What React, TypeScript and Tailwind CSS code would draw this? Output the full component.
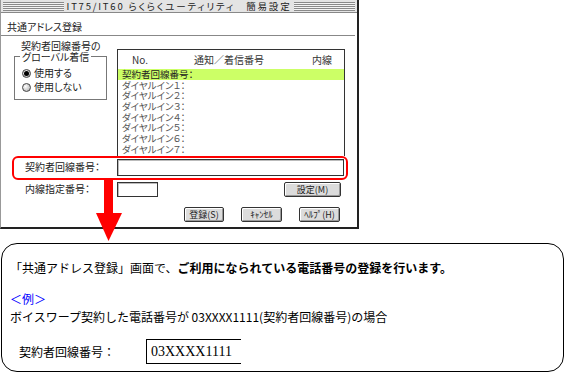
import React from "react";

const jp = "font-['Noto_Sans_CJK_JP','Noto_Sans',sans-serif]";
const palt = "[font-feature-settings:'palt']";

const Stripes = () => (
  <div className="flex-1 h-[9px] bg-[repeating-linear-gradient(to_bottom,#8a8a8a_0px,#8a8a8a_1px,#f4f4f4_1px,#f4f4f4_2px)]" />
);

const MacButton = ({ label, w }: { label: string; w: string }) => (
  <div
    className={`${w} h-[15px] flex items-center justify-center rounded-[2px] border border-[#333] bg-[#dcdcdc] shadow-[inset_1px_1px_0_#fff,inset_-1px_-1px_0_#999] text-[9px] leading-[11px] text-[#222]`}
  >
    {label}
  </div>
);

const Radio = ({ on, label }: { on: boolean; label: string }) => (
  <div className="flex items-center h-[12px] gap-[3px]">
    <div className="w-[9px] h-[9px] rounded-full border border-[#444] bg-[radial-gradient(circle_at_35%_35%,#fff,#aaa)] flex items-center justify-center">
      {on && <div className="w-[5px] h-[5px] rounded-full bg-black" />}
    </div>
    <span className="text-[10px] leading-[12px] text-[#222]">{label}</span>
  </div>
);

const rows = [
  "ダイヤルイン１：",
  "ダイヤルイン２：",
  "ダイヤルイン３：",
  "ダイヤルイン４：",
  "ダイヤルイン５：",
  "ダイヤルイン６：",
  "ダイヤルイン７：",
];

const SettingsWindow = () => {
  return (
    <div className={`w-[359px] h-[229px] border-l border-l-[#999] border-r-2 border-r-[#222] border-b-2 border-b-[#222] bg-white ${palt}`}>
      {/* title bar */}
      <div className="h-[13px] flex items-center gap-[3px] px-[2px] bg-[#e4e4e4] border-b border-[#888]">
        <Stripes />
        <span className="text-[9.5px] leading-[12px] tracking-[1.8px] text-[#222] whitespace-nowrap">
          IT75/IT60 らくらくユーティリティ　簡易設定
        </span>
        <Stripes />
      </div>

      <div className="h-[23px] pt-[8px] pl-[6px] text-[10px] leading-[12px] text-[#222] border-b border-[#888] mr-[2px]">
        共通アドレス登録
      </div>

      {/* group + list */}
      <div className="flex h-[120px]">
        <div className="w-[116px] shrink-0">
          <div className="pt-[5px] pl-[20px] text-[10px] leading-[10px] text-[#222]">
            契約者回線番号の
          </div>
          <div className="relative ml-[13px] mt-[5px] w-[93px] h-[44px] border border-[#777] pt-[10px] pl-[7px] flex flex-col gap-[2px]">
            <span className="absolute left-[5px] -top-[5px] bg-white px-[2px] text-[10px] leading-[10px] text-[#222]">
              グローバル着信
            </span>
            <Radio on label="使用する" />
            <Radio on={false} label="使用しない" />
          </div>
        </div>

        <div className="mt-[13px] w-[228px] border-t border-x border-[#333] text-[9.5px]">
          <div className="h-[19px] flex items-center leading-[12px] text-[10px] text-[#333]">
            <span className="ml-[14px] w-[62px]">No.</span>
            <span className="w-[118px]">通知／着信番号</span>
            <span>内線</span>
          </div>
          <div className="h-[10.7px] leading-[10.7px] pl-[4px] bg-[#ccff66] text-[#222]">
            契約者回線番号：
          </div>
          {rows.map((r) => (
            <div key={r} className="h-[10.7px] leading-[10.7px] pl-[4px] text-[#555]">
              {r}
            </div>
          ))}
        </div>
      </div>

      {/* highlighted entry row */}
      <div className="ml-[11px] w-[336px] h-[24px] border-2 border-[#ff0000] rounded-[6px] flex items-start">
        <span className="w-[103px] pl-[11px] mt-[3px] text-[10px] leading-[12px] text-[#222]">
          契約者回線番号：
        </span>
        <div className="mt-[1px] w-[227px] h-[17px] border border-[#333] bg-white shadow-[inset_1px_1px_0_#bbb]" />
      </div>

      <div className="flex items-center h-[16px] mt-[1px]">
        <span className="w-[116px] pl-[24px] text-[10px] leading-[12px] text-[#222]">内線指定番号：</span>
        <div className="w-[41px] h-[15px] border border-[#333] bg-white shadow-[inset_1px_1px_0_#bbb]" />
        <div className="ml-[126px]">
          <MacButton label="設定(M)" w="w-[57px]" />
        </div>
      </div>

      <div className="flex mt-[10px] pl-[183px] gap-[17px]">
        <MacButton label="登録(S)" w="w-[40px]" />
        <MacButton label="ｷｬﾝｾﾙ" w="w-[41px]" />
        <MacButton label="ﾍﾙﾌﾟ(H)" w="w-[41px]" />
      </div>
    </div>
  );
};

const Callout = () => (
  <div className="ml-[1px] mt-[14px] w-[563px] h-[129px] border border-black rounded-[16px] pl-[8px] pt-[15px] text-[12px] leading-[18px] text-black">
    <div className="whitespace-nowrap">
      「共通アドレス登録」画面で、
      <span className="font-bold">ご利用になられている電話番号の登録を行います。</span>
    </div>
    <div className="mt-[13px] text-[#0000ff]">＜例＞</div>
    <div className="whitespace-nowrap">
      ボイスワープ契約した電話番号が 03XXXX1111(契約者回線番号)の場合
    </div>
    <div className="flex items-center mt-[13px] ml-[9px]">
      <span className="w-[127px]">契約者回線番号：</span>
      <div className="w-[95px] h-[25px] border-l border-y border-black pl-[4px] flex items-center font-['Liberation_Serif',serif] text-[14px]">
        03XXXX1111
      </div>
    </div>
  </div>
);

export default function App() {
  return (
    <div className={`relative w-[565px] h-[373px] bg-white overflow-hidden ${jp}`}>
      <SettingsWindow />
      <Callout />
      <svg className="absolute left-[96px] top-[179px] z-10" width="28" height="63" viewBox="0 0 28 63">
        <rect x="8" y="0" width="9" height="35" fill="#ff0000" />
        <polygon points="0,34 26,34 12.5,62" fill="#ff0000" />
      </svg>
    </div>
  );
}
